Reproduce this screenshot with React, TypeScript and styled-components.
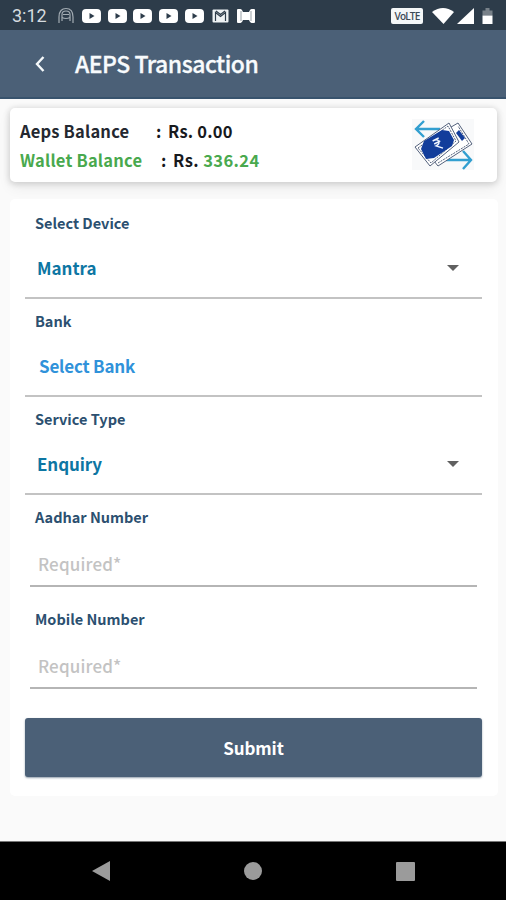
import React from "react";
import styled, { createGlobalStyle } from "styled-components";

const Global = createGlobalStyle`
  * { box-sizing: border-box; }
  body { margin: 0; background: #fafafa; }
  button, input { font: inherit; border: 0; background: none; padding: 0; margin: 0; }
`;

const Screen = styled.div`
  width: 506px;
  height: 900px;
  display: flex;
  flex-direction: column;
  overflow: hidden;
  background: #fafafa;
  font-family: "Noto Sans CJK SC", "Noto Sans", sans-serif;
  font-weight: 700;
`;

const StatusBar = styled.header`
  height: 30px;
  flex: none;
  display: flex;
  align-items: center;
  padding: 1px 11px 0 12px;
  background: #2d3c4a;
  color: #d5dbdf;
`;

const Clock = styled.span`
  width: 46px;
  font: 400 18px/28px Roboto, sans-serif;
`;

const Notifications = styled.div`
  display: flex;
  align-items: center;
  flex: 1;
`;

const Signals = styled.div`
  display: flex;
  align-items: center;
`;

const VolteBadge = styled.span`
  width: 32px;
  height: 16px;
  margin-right: 9px;
  border-radius: 2px;
  background: #f4f7f8;
  color: #3c4a56;
  font: 600 10px/16px "Open Sans", sans-serif;
  letter-spacing: -0.8px;
  text-align: center;
`;

const AppBar = styled.div`
  height: 69px;
  flex: none;
  display: flex;
  align-items: center;
  padding-left: 34px;
  background: #4b6077;
  border-bottom: 2px solid #38536d;
`;

const BackButton = styled.button`
  width: 41px;
  height: 24px;
  display: flex;
  align-items: center;
`;

const Title = styled.h1`
  margin: -2px 0 0;
  color: #f8fbfd;
  font-size: 23px;
  font-weight: 500;
  line-height: 34px;
  letter-spacing: -0.5px;
  -webkit-text-stroke: 0.3px #f8fbfd;
  white-space: nowrap;
`;

const Content = styled.main`
  flex: 1;
  padding: 9px 8px 0 10px;
`;

const BalanceCard = styled.section`
  height: 74px;
  margin-right: 1px;
  padding: 9px 23px 0 10px;
  display: flex;
  justify-content: space-between;
  border-radius: 5px;
  background: #fff;
  box-shadow: 0 1px 6px 1px rgba(0, 0, 0, 0.15), 0 6px 14px rgba(0, 0, 0, 0.06);
`;

const BalanceRow = styled.div<{ $tone: string; $name: number; $gap: number }>`
  display: grid;
  grid-template-columns: ${(p) => p.$name}px ${(p) => p.$gap}px auto;
  height: 29px;
  line-height: 28px;
  font-size: 16.5px;
  letter-spacing: 0.2px;
  white-space: nowrap;
  color: ${(p) => p.$tone};
`;

const Dark = styled.span`
  color: #17191d;
`;

const Amount = styled.span`
  letter-spacing: 0.4px;
`;

const Artwork = styled.div`
  padding-top: 2px;
`;

const FormCard = styled.form`
  height: 597px;
  margin-top: 17px;
  padding: 0 16px 0 15px;
  border-radius: 5px;
  background: #fff;
`;

const Field = styled.div<{ $height: number; $top: number }>`
  height: ${(p) => p.$height}px;
  padding-top: ${(p) => p.$top}px;
  display: flex;
  flex-direction: column;
`;

const Label = styled.label`
  padding-left: 10px;
  height: 22px;
  line-height: 22px;
  font-size: 14.5px;
  color: #2c5070;
`;

const SelectRow = styled.div<{ $indent: number; $tone: string; $track: number }>`
  flex: 1;
  display: flex;
  align-items: center;
  justify-content: space-between;
  padding: 4px 23px 0 ${(p) => p.$indent}px;
  border-bottom: 2px solid #c3c3c3;
  font-size: 17px;
  line-height: 26px;
  letter-spacing: ${(p) => p.$track}px;
  color: ${(p) => p.$tone};
`;

const Input = styled.input`
  flex: 1;
  min-width: 0;
  margin: 0 5px;
  padding: 14px 0 0 8px;
  border-bottom: 2px solid #b5b5b5;
  border-radius: 0;
  font-size: 17px;
  font-weight: 500;
  letter-spacing: 0.15px;
  outline: none;
  &::placeholder { color: #c3c3c3; opacity: 1; }
`;

const Submit = styled.button`
  display: block;
  width: 457px;
  height: 59px;
  margin-top: 29px;
  border-radius: 3px;
  background: #4b6077;
  color: #fff;
  font-size: 17px;
  line-height: 59px;
  letter-spacing: -0.1px;
  box-shadow: 0 1px 2px rgba(75, 96, 119, 0.6);
`;

const NavBar = styled.nav`
  height: 59px;
  flex: none;
  display: flex;
  align-items: center;
  justify-content: space-between;
  padding: 0 91px 0 92px;
  border-top: 1px solid #777;
  background: #000;
`;

const Ghost = () => (
  <svg width="24" height="18" viewBox="0 0 24 18" fill="none" stroke="#a3acb3" strokeWidth="1.2">
    <path d="M1 16V10C1 4 4 1.500 8 1.500s7 2.500 7 8.500v6M4 14V7.500C4 5 6 4 8 4s4 1 4 3.500V14" />
    <path d="M5 7.500h6M4 10.500q4 2 8 0" />
  </svg>
);

const Video = () => (
  <svg width="25.700" height="16" viewBox="0 0 25.700 16">
    <rect x="0" y="1" width="19" height="14" rx="4" fill="#fff" />
    <path d="M7.500 5v6l5-3z" fill="#2d3c4a" />
  </svg>
);

const Mail = () => (
  <svg width="27" height="16" viewBox="-2.500 0 27 16">
    <rect x="0" y="1.500" width="16" height="13" rx="1" fill="#eef2f4" />
    <path d="M3 13V4.500l5 4 5-4V13M3.500 3l4.500 3.500L12.500 3" fill="none" stroke="#2d3c4a" strokeWidth="1.200" />
  </svg>
);

const Film = () => (
  <svg width="18" height="16" viewBox="0 0 18 16" fill="#fff">
    <path d="M1 1h2.500q1.500 0 2.500 3h6q1-3 2.500-3H17q1 0 1 1v12q0 1-1 1h-2.500q-1.500 0-2.500-3H6q-1 3-2.500 3H1q-1 0-1-1V2q0-1 1-1z" />
    <path d="M4 3v10M14 3v10" stroke="#2d3c4a" strokeWidth=".5" />
  </svg>
);

const Reception = () => (
  <svg width="63" height="18" viewBox="0 0 63 18" fill="#fff">
    <path d="M0 5Q11 -3 22 5L11.500 17z" />
    <path d="M25 17L42 1v16z" />
    <path d="M50.500 8.500V3.500h3V1h4v2.500h3v5z" fill="#788189" />
    <path d="M50.500 8.500h10V17h-10z" />
  </svg>
);

const MoneyTransfer = () => (
  <svg width="62" height="51" viewBox="0 0 62 51">
    <rect width="62" height="51" fill="#f8f9fa" />
    <g fill="none" stroke="#329fd0" strokeWidth="2.400">
      <path d="M28 10H4M12 2L4 10l8 8M34 41h25M51 32l8 9-8 9" />
    </g>
    <g strokeLinejoin="round" stroke="#53617c" strokeWidth="1">
      <path d="M22 42l4 5L60 25 46 4 34 11z" fill="#fff" />
      <path d="M26 44L57 25 46 7" fill="none" strokeDasharray="2 1" />
      <path d="M44 14l3-3 6 8-3 3z" fill="#123d9b" stroke="none" />
      <path d="M3 28L37 4l10 19-29 24z" fill="#fff" />
      <path d="M6 29L36 7l8 15-25 22z" fill="none" strokeDasharray="2 1" />
    </g>
    <path d="M9 30l3-8 18-11 7 1 5 9-2 6-18 12-8 1z" fill="#123d9b" />
    <g transform="translate(26 25) rotate(-27) scale(.85)" fill="none" stroke="#eff5ff" strokeWidth="1.800">
      <path d="M-4-6h8M-4-2h8M-3-6c7 0 7 7 0 7l6 6" />
    </g>
  </svg>
);

const Caret = () => (
  <svg width="12" height="6" viewBox="0 0 12 6" fill="#606060"><path d="M0 0h12L6 6z" /></svg>
);

export default function App() {
  return (
    <>
      <Global />
      <Screen>
        <StatusBar>
          <Clock>3:12</Clock>
          <Notifications>
            <Ghost />
            {[0, 1, 2, 3, 4].map((n) => <Video key={n} />)}
            <Mail />
            <Film />
          </Notifications>
          <Signals>
            <VolteBadge>VoLTE</VolteBadge>
            <Reception />
          </Signals>
        </StatusBar>
        <AppBar>
          <BackButton type="button" aria-label="Back">
            <svg width="12" height="18" viewBox="0 0 12 18" fill="none" stroke="#f5f9fb" strokeWidth="2.400"><path d="M9.500 2L3 9l6.500 7" /></svg>
          </BackButton>
          <Title>AEPS Transaction</Title>
        </AppBar>
        <Content>
          <BalanceCard>
            <div>
              <BalanceRow $tone="#242830" $name={136} $gap={12}><span>Aeps Balance</span><Dark>:</Dark><Dark>Rs. 0.00</Dark></BalanceRow>
              <BalanceRow $tone="#49a94e" $name={141} $gap={12}><span>Wallet Balance</span><Dark>:</Dark><Amount><Dark>Rs. </Dark>336.24</Amount></BalanceRow>
            </div>
            <Artwork><MoneyTransfer /></Artwork>
          </BalanceCard>
          <FormCard onSubmit={(e) => e.preventDefault()}>
            <Field $height={100} $top={13}>
              <Label>Select Device</Label>
              <SelectRow $indent={12} $tone="#0d76a3" $track={0}>Mantra<Caret /></SelectRow>
            </Field>
            <Field $height={98} $top={11}>
              <Label>Bank</Label>
              <SelectRow $indent={14} $tone="#3092da" $track={-0.2}>Select Bank</SelectRow>
            </Field>
            <Field $height={98} $top={11}>
              <Label>Service Type</Label>
              <SelectRow $indent={12} $tone="#0d76a3" $track={-0.1}>Enquiry<Caret /></SelectRow>
            </Field>
            <Field $height={92} $top={11}>
              <Label htmlFor="aadhar">Aadhar Number</Label>
              <Input id="aadhar" placeholder="Required*" />
            </Field>
            <Field $height={102} $top={21}>
              <Label htmlFor="mobile">Mobile Number</Label>
              <Input id="mobile" placeholder="Required*" />
            </Field>
            <Submit type="submit">Submit</Submit>
          </FormCard>
        </Content>
        <NavBar>
          <svg width="18" height="22" viewBox="0 0 18 22"><path d="M0 11L18 1v20z" fill="#9b9b9b" /></svg>
          <svg width="18" height="18" viewBox="0 0 18 18"><circle cx="9" cy="9" r="9" fill="#9b9b9b" /></svg>
          <svg width="19" height="19" viewBox="0 0 19 19"><rect width="19" height="19" rx="1" fill="#9b9b9b" /></svg>
        </NavBar>
      </Screen>
    </>
  );
}
